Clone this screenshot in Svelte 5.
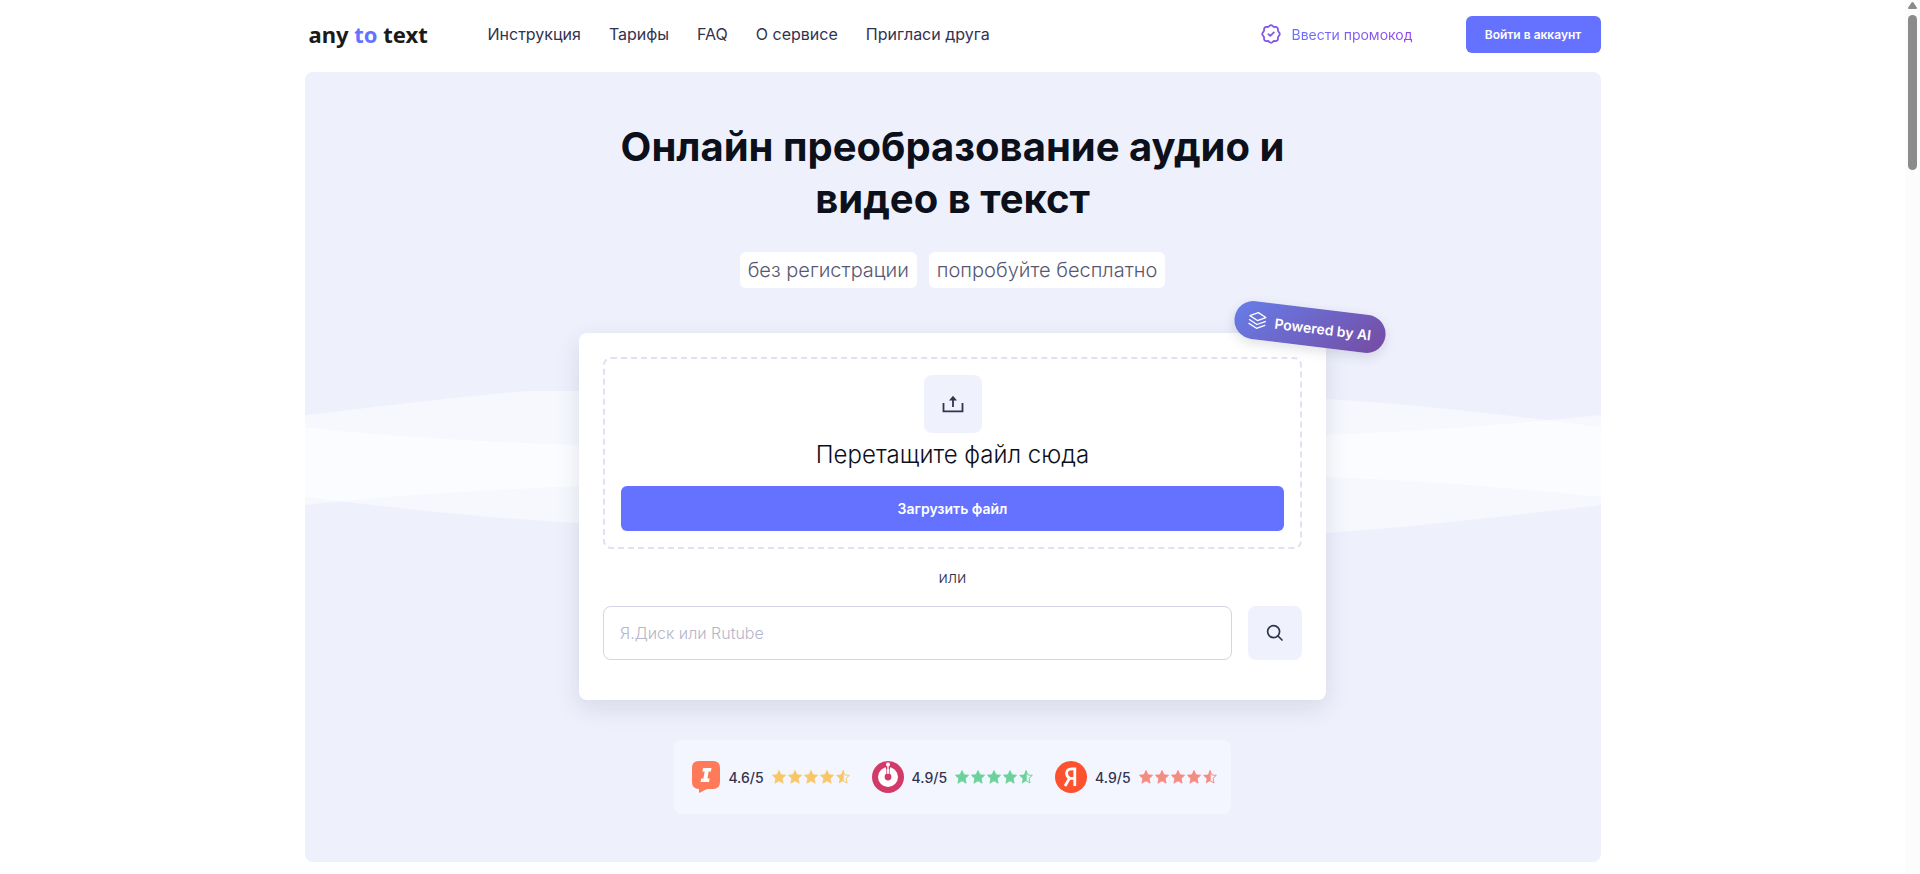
<script>
  const links = ['Инструкция', 'Тарифы', 'FAQ', 'О сервисе', 'Пригласи друга'];
  const ratings = [
    { id: 'irecommend', score: '4.6/5', color: '#f7c768' },
    { id: 'otzovik', score: '4.9/5', color: '#6bd299' },
    { id: 'yandex', score: '4.9/5', color: '#f58c82' }
  ];
  let source = $state('');
</script>

{#snippet star(half)}
  <svg class="star" viewBox="0 0 14 14" aria-hidden="true">
    {#if half}
      <path d="M7 .8 8.9 4.9 13.3 5.4 10 8.4 11 13 7 10.7Z" fill="none" stroke="currentColor" stroke-width="1" stroke-linejoin="round" />
      <path d="M7.5 0V10.8L2.7 13.6 3.7 8.8 0 5.1 5 4.5 7 0Z" fill="currentColor" />
    {:else}
      <path d="M7 .5 9 4.7 13.6 5.2 10.2 8.4 11.1 13.2 7 10.8 2.9 13.2 3.8 8.4 .4 5.2 5 4.7Z" fill="currentColor" stroke="currentColor" stroke-width=".8" stroke-linejoin="round" />
    {/if}
  </svg>
{/snippet}

<div class="shell">
  <div class="page">
    <header>
      <a class="logo" href="#top">any <span>to</span> text</a>
      <nav>
        {#each links as link}
          <a href="#top">{link}</a>
        {/each}
      </nav>
      <a class="promo" href="#promo">
        <svg viewBox="0 0 20 20" width="20" height="20" fill="none" stroke="#8457e6" stroke-width="1.8" stroke-linecap="round" stroke-linejoin="round" aria-hidden="true">
          <path d="M10 1.2C11.5 1.2 11.9 2.7 13.2 3 14.5 3.1 15.4 2.5 16.3 3.6 17.4 4.6 16.7 5.6 17 6.8 17.3 8.1 18.8 8.5 18.8 10S17.3 11.9 17 13.2C16.7 14.4 17.4 15.4 16.3 16.4 15.4 17.5 14.5 16.9 13.2 17 11.9 17.3 11.5 18.8 10 18.8S8.1 17.3 6.8 17C5.5 16.9 4.6 17.5 3.7 16.4 2.6 15.4 3.3 14.4 3 13.2 2.7 11.9 1.2 11.5 1.2 10S2.7 8.1 3 6.8C3.3 5.6 2.6 4.6 3.7 3.6 4.6 2.5 5.5 3.1 6.8 3 8.1 2.7 8.5 1.2 10 1.2Z" />
          <path d="m7.4 10.3 1.9 1.6L12.8 8.4" />
        </svg>
        <span>Ввести промокод</span>
      </a>
      <button class="login" type="button">Войти в аккаунт</button>
    </header>

    <main id="top">
      <svg class="waves" viewBox="0 0 1296 160" preserveAspectRatio="none" aria-hidden="true">
        <path d="M0 30C50 25 145 12 225 6H274C500 2 780 62 1021 50 1120 46 1200 40 1296 30V120C1200 131 1120 141 1021 148 780 160 500 88 274 101 180 105 100 109 0 120Z" />
        <path d="M0 42C90 52 180 57 274 60 520 66 760 0 1021 14 1120 20 1200 30 1296 42V112C1200 102 1120 96 1021 92 780 84 540 150 274 138 180 133 100 124 0 112Z" />
      </svg>

      <h1>Онлайн преобразование аудио и видео в текст</h1>
      <div class="tags">
        <span>без регистрации</span>
        <span>попробуйте бесплатно</span>
      </div>

      <section class="card">
        <div class="badge">
          <svg viewBox="0 0 18 18" width="18" height="18" fill="none" stroke="#fff" stroke-width="1.3" stroke-linecap="round" stroke-linejoin="round" aria-hidden="true">
            <path d="M9 1 17 5 9 9 1 5ZM1 9l8 4 8-4M1 12.8l8 4 8-4" />
          </svg>
          Powered by AI
        </div>

        <div class="drop">
          <div class="upload-icon">
            <svg viewBox="0 0 22 18" width="22" height="18" fill="none" stroke="#323350" stroke-width="1.8" aria-hidden="true">
              <path d="M1.5 8v8.4h19V8M11 12V4" />
              <path d="M11 .8 15 5.6H7Z" fill="#323350" stroke="none" />
            </svg>
          </div>
          <p>Перетащите файл сюда</p>
          <button class="upload" type="button">Загрузить файл</button>
        </div>

        <div class="or">или</div>

        <form onsubmit={(e) => e.preventDefault()}>
          <input type="text" aria-label="Ссылка на файл" placeholder="Я.Диск или Rutube" bind:value={source} />
          <button class="search" type="submit" aria-label="Найти">
            <svg viewBox="0 0 18 18" width="18" height="18" fill="none" stroke="#323350" stroke-width="1.7" stroke-linecap="round" aria-hidden="true">
              <circle cx="7.6" cy="7.6" r="6" />
              <path d="m12 12 4 4" />
            </svg>
          </button>
        </form>
      </section>

      <div class="ratings">
        {#each ratings as r}
          <div class="rating">
            {#if r.id === 'irecommend'}
              <svg viewBox="0 0 28 32" width="28" height="32" aria-hidden="true">
                <path d="M7 0H21Q28 0 28 7V21Q28 28 21 28H15L7 32V28Q0 28 0 21V7Q0 0 7 0Z" fill="#ff7a59" />
                <path d="M11 7h8.5l-.6 3.4h-2.2l-1.3 7.2h2.3L17 21H8.6l.6-3.4h2.2l1.3-7.2h-2.3Z" fill="#fff" />
              </svg>
            {:else if r.id === 'otzovik'}
              <svg viewBox="0 0 32 32" width="32" height="32" aria-hidden="true">
                <circle cx="16" cy="16" r="16" fill="#d33a68" />
                <circle cx="16" cy="16" r="10" fill="#fff" />
                <path d="M14 5h4v3h-4Z" fill="#d33a68" />
                <path d="M14.8 7v9M17.2 7v9" stroke="#d33a68" stroke-width=".9" />
                <circle cx="16" cy="16" r="3.4" fill="#d33a68" />
                <circle cx="16" cy="3.6" r="2" fill="#fff" />
                <path d="M16 4v9" stroke="#fff" stroke-width="1.3" />
              </svg>
            {:else}
              <svg viewBox="0 0 32 32" width="32" height="32" aria-hidden="true">
                <circle cx="16" cy="16" r="16" fill="#fc5230" />
                <path d="M19.8 25V7.8h-3.2c-3.2 0-5 1.8-5 4.6 0 2.2 1 3.4 3 4.8L10 25M19.8 17.4h-4.2" fill="none" stroke="#fff" stroke-width="2.8" />
              </svg>
            {/if}
            <span class="score">{r.score}</span>
            <span class="stars" style="color: {r.color}">
              {#each [0, 1, 2, 3, 4] as i}
                {@render star(i === 4)}
              {/each}
            </span>
          </div>
        {/each}
      </div>
    </main>
  </div>

  <div class="scrollbar" aria-hidden="true">
    <svg viewBox="0 0 9 7" width="9" height="7"><path d="M4.5 0Q5.3 0 5.8 1L8.8 5.5Q9.3 7 8 7H1Q-.3 7 .2 5.5L3.2 1Q3.7 0 4.5 0Z" fill="#8b8b8b" /></svg>
    <div class="thumb"></div>
  </div>
</div>

<style>
  :global(body) {
    margin: 0;
    background: #fff;
    font-family: Inter, "Noto Sans", sans-serif;
    color: #323350;
  }
  .shell {
    display: flex;
    height: 100vh;
    overflow: hidden;
  }
  .page {
    flex: 1;
    max-width: 1296px;
    margin: 0 auto;
  }
  a {
    color: inherit;
    text-decoration: none;
  }
  button {
    border: 0;
    padding: 0;
    font-family: inherit;
    color: #fff;
    background: #6472ff;
    border-radius: 6px;
    cursor: pointer;
  }
  header {
    display: flex;
    align-items: center;
    height: 72px;
    padding-bottom: 4px;
    box-sizing: border-box;
  }
  .logo {
    width: 179px;
    padding-left: 4px;
    font: 700 22px/32px "Noto Sans", sans-serif;
    color: #1a1a1a;
  }
  .logo span {
    color: #6472ff;
  }
  nav {
    display: flex;
    gap: 28px;
    flex: 1;
    font-size: 16px;
    font-weight: 400;
    white-space: nowrap;
  }
  .promo {
    display: flex;
    align-items: center;
    gap: 10px;
    margin-right: 53px;
    font-size: 14px;
    font-weight: 400;
  }
  .promo span {
    background: linear-gradient(90deg, #6472ff, #9747e8);
    background-clip: text;
    color: transparent;
  }
  .login {
    width: 135px;
    height: 37px;
    font-size: 12px;
    font-weight: 600;
  }
  main {
    position: relative;
    display: flex;
    flex-direction: column;
    align-items: center;
    padding: 49px 0 48px;
    background: #eef0fc;
    border-radius: 8px;
  }
  .waves {
    position: absolute;
    left: 0;
    top: 313px;
    width: 100%;
    height: 160px;
    fill: #fdffff;
    fill-opacity: 0.55;
  }
  h1 {
    max-width: 700px;
    margin: 0 0 27px;
    font-size: 40px;
    line-height: 52px;
    font-weight: 700;
    text-align: center;
    color: #0b101a;
  }
  .tags {
    display: flex;
    gap: 12px;
    margin-bottom: 45px;
  }
  .tags span {
    padding: 0 8px;
    font-size: 20px;
    line-height: 36px;
    font-weight: 300;
    color: #565873;
    background: #fff;
    border-radius: 6px;
  }
  .card {
    position: relative;
    width: 100%;
    max-width: 747px;
    box-sizing: border-box;
    padding: 24px 24px 40px;
    background: #fff;
    border-radius: 8px;
    box-shadow: 0 8px 24px rgba(50, 51, 80, 0.12);
  }
  .badge {
    position: absolute;
    top: -25px;
    right: -60px;
    display: flex;
    align-items: center;
    justify-content: center;
    gap: 8px;
    width: 152px;
    height: 38px;
    border-radius: 19px;
    background: linear-gradient(135deg, #667eea, #764ba2);
    box-shadow: 0 4px 12px rgba(50, 51, 80, 0.15);
    color: #fff;
    font-size: 14px;
    font-weight: 600;
    transform: rotate(7deg);
  }
  .drop {
    display: flex;
    flex-direction: column;
    align-items: center;
    padding: 16px;
    border: 2px dashed #e1e2f1;
    border-radius: 8px;
  }
  .upload-icon {
    display: grid;
    place-items: center;
    width: 58px;
    height: 58px;
    background: #eff1fd;
    border-radius: 8px;
  }
  .drop p {
    margin: 6px 0 15px;
    font-size: 24px;
    line-height: 32px;
    font-weight: 300;
    color: #0b101a;
  }
  .upload {
    width: 100%;
    height: 45px;
    font-size: 14px;
    font-weight: 600;
  }
  .or {
    padding: 16px 0 17px;
    font-size: 16px;
    line-height: 24px;
    font-weight: 300;
    text-align: center;
  }
  form {
    display: flex;
    gap: 16px;
  }
  input {
    flex: 1;
    min-width: 0;
    height: 54px;
    box-sizing: border-box;
    padding: 0 16px;
    border: 1px solid #d3d4e6;
    border-radius: 8px;
    background: #fff;
    font: 300 16px Inter, "Noto Sans", sans-serif;
    color: #323350;
  }
  input::placeholder {
    color: #b4b6c9;
    opacity: 1;
  }
  .search {
    display: grid;
    place-items: center;
    width: 54px;
    height: 54px;
    background: #eff1fd;
    border-radius: 8px;
  }
  .ratings {
    position: relative;
    display: flex;
    gap: 22px;
    margin-top: 40px;
    padding: 21px 14px 21px 18px;
    background: #f4f6ff;
    border-radius: 8px;
  }
  .rating {
    display: flex;
    align-items: center;
    gap: 8px;
  }
  .score {
    font-size: 14px;
    font-weight: 500;
  }
  .stars {
    display: flex;
    gap: 2px;
  }
  .star {
    width: 14px;
    height: 14px;
    overflow: visible;
  }
  .scrollbar {
    display: flex;
    flex-direction: column;
    align-items: center;
    gap: 6px;
    width: 15px;
    padding-top: 2px;
    box-sizing: border-box;
    background: #fcfcfc;
  }
  .thumb {
    width: 9px;
    height: 155px;
    border-radius: 5px;
    background: #8b8b8b;
  }
</style>
